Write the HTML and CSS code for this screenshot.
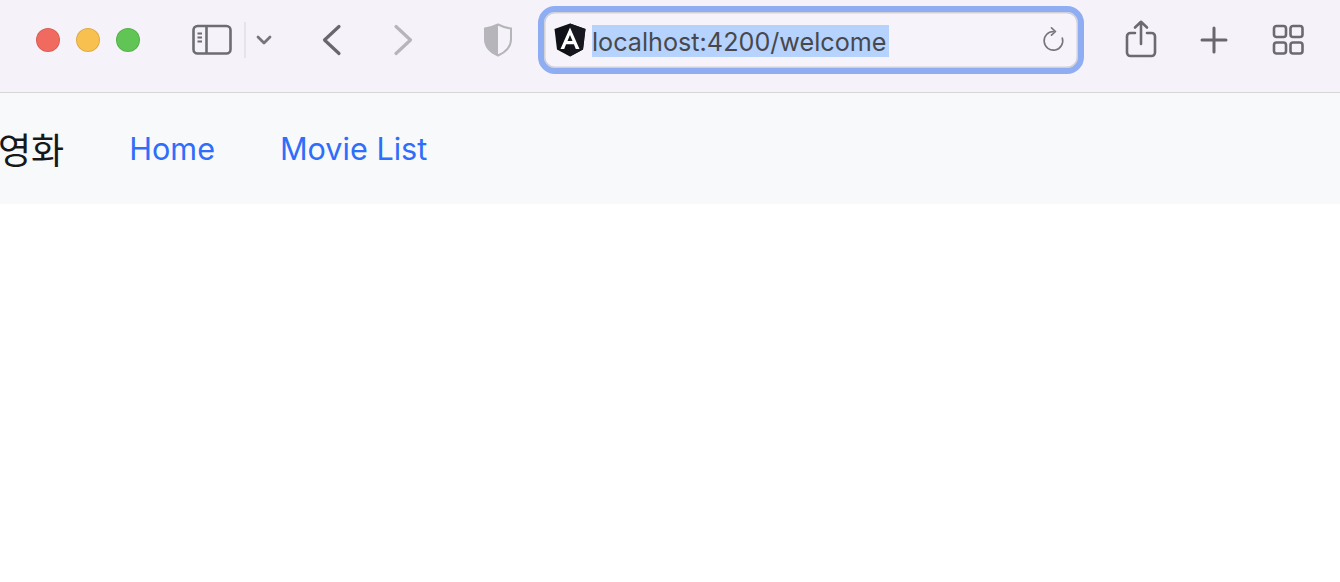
FILE: index.html
```html
<!DOCTYPE html>
<html lang="ko">
<head>
    <meta charset="UTF-8">
    <meta name="viewport" content="width=device-width, initial-scale=1.0">
    <title>localhost:4200/welcome</title>
    <link rel="stylesheet" href="styles.css">
</head>
<body>
    <header class="toolbar">
        <div class="lights">
            <span class="light red"></span>
            <span class="light yellow"></span>
            <span class="light green"></span>
        </div>

        <svg class="icon sidebar-icon" width="40" height="32" viewBox="0 0 40 32" fill="none" stroke="#6e6c73" stroke-width="2.6">
            <rect x="1.5" y="2" width="37" height="27.5" rx="4"/>
            <path d="M14.5 2v27.5"/>
            <path d="M5.5 9.500h4.500M5.500 13.500h4.500M5.500 17.500h4.500" stroke-width="1.800"/>
        </svg>
        <span class="divider"></span>
        <svg class="icon chevron-icon" width="16" height="12" viewBox="0 0 16 12" fill="none" stroke="#77757c" stroke-width="2.800" stroke-linecap="round" stroke-linejoin="round">
            <path d="M2 3l6 6 6-6"/>
        </svg>

        <svg class="icon back-icon" width="22" height="32" viewBox="0 0 22 32" fill="none" stroke="#69676d" stroke-width="3.200" stroke-linecap="round" stroke-linejoin="round">
            <path d="M18 2.500L3.500 16 18 29.500"/>
        </svg>
        <svg class="icon forward-icon" width="22" height="32" viewBox="0 0 22 32" fill="none" stroke="#b6b5ba" stroke-width="3.200" stroke-linecap="round" stroke-linejoin="round">
            <path d="M4 2.500L18.500 16 4 29.500"/>
        </svg>

        <svg class="icon shield-icon" width="30" height="34" viewBox="0 0 30 34" fill="none">
            <path d="M15 1.500C19 3.500 23 5 28 5.500V16C28 24 22 29.500 15 32.500 8 29.500 2 24 2 16V5.500C7 5 11 3.500 15 1.500Z" stroke="#b6b5ba" stroke-width="2"/>
            <path d="M15 1.500V32.500C8 29.500 2 24 2 16V5.500C7 5 11 3.500 15 1.500Z" fill="#b6b5ba"/>
        </svg>

        <div class="address">
            <svg class="favicon" width="32" height="34" viewBox="0 0 32 34">
                <path d="M16 0.500L31.500 6 29 26.500 16 33.500 3 26.500 0.500 6Z" fill="#0f1117"/>
                <path d="M16 0.500L31.500 6 29 26.500 16 33.500Z" fill="#17181f"/>
                <path d="M16 4.500L6.500 26H10.200L12.100 21.200H19.900L21.800 26H25.500ZM13.500 18L16 12 18.500 18Z" fill="#fff" fill-rule="evenodd"/>
            </svg>
            <span class="url">localhost:4200/welcome</span>
            <svg class="reload-icon" width="24" height="26" viewBox="0 0 24 26" fill="none" stroke="#77757c" stroke-width="1.600" stroke-linecap="round" stroke-linejoin="round">
                <path d="M12.500 4.500A9.300 9.300 0 1 0 21.300 11"/>
                <path d="M10.500 0.800L14.500 4.500 10.500 8.200"/>
            </svg>
        </div>

        <svg class="icon share-icon" width="32" height="38" viewBox="0 0 32 38" fill="none" stroke="#6c6a70" stroke-width="2.600" stroke-linecap="round" stroke-linejoin="round">
            <path d="M10 13H5.500C3.500 13 2 14.500 2 16.500V32.500C2 34.500 3.500 36 5.500 36H26.500C28.500 36 30 34.500 30 32.500V16.500C30 14.500 28.500 13 26.500 13H22"/>
            <path d="M16 24V2M10 7.500L16 1.800 22 7.500"/>
        </svg>
        <svg class="icon plus-icon" width="28" height="28" viewBox="0 0 28 28" fill="none" stroke="#69676d" stroke-width="3" stroke-linecap="round">
            <path d="M14 2v24M2 14h24"/>
        </svg>
        <svg class="icon tabs-icon" width="32" height="32" viewBox="0 0 32 32" fill="none" stroke="#6c6a70" stroke-width="2.600">
            <rect x="2" y="2" width="12" height="11" rx="2.500"/>
            <rect x="18.500" y="2" width="12" height="11" rx="2.500"/>
            <rect x="2" y="18.500" width="12" height="11" rx="2.500"/>
            <rect x="18.500" y="18.500" width="12" height="11" rx="2.500"/>
        </svg>
    </header>

    <nav class="navbar">
        <span class="brand">영화</span>
        <a class="nav-link" href="#">Home</a>
        <a class="nav-link" href="#">Movie List</a>
    </nav>
</body>
</html>
```

FILE: styles.css
```css
* {
    margin: 0;
    padding: 0;
    box-sizing: border-box;
}

body {
    font-family: Inter, "Noto Sans CJK KR", sans-serif;
    background: white;
    height: 582px;
    overflow: hidden;
}

.toolbar {
    display: flex;
    align-items: center;
    height: 93px;
    padding: 0 0 13px 36px;
    background: #f5f3f9;
    border-bottom: 1px solid #d6d5d8;
}

.icon {
    flex: none;
}

.lights {
    display: flex;
    gap: 16px;
}

.light {
    width: 24px;
    height: 24px;
    border-radius: 50%;
    border: 1px solid rgba(0, 0, 0, 0.1);
}

.red {
    background: #f16a60;
}

.yellow {
    background: #f8c04e;
}

.green {
    background: #60c554;
}

.sidebar-icon {
    margin-left: 52px;
}

.divider {
    width: 2px;
    height: 36px;
    margin-left: 12px;
    background: #e6e4ea;
}

.chevron-icon {
    margin-left: 10px;
}

.back-icon {
    margin-left: 49px;
}

.forward-icon {
    margin-left: 49px;
}

.shield-icon {
    margin-left: 69px;
}

.address {
    display: flex;
    align-items: center;
    width: 546px;
    height: 68px;
    margin-left: 25px;
    padding: 0 13px 0 10px;
    background: #f6f4fa;
    border: 6px solid #8fadf3;
    border-radius: 17px;
    box-shadow: inset 0 0 0 1.500px #d3d1d6;
}

.favicon {
    flex: none;
}

.url {
    margin-left: 6px;
    margin-top: 3px;
    padding-top: 2px;
    padding-right: 2px;
    font-size: 25.2px;
    line-height: 30px;
    color: #48484c;
    background: #b6d3fd;
}

.reload-icon {
    margin-left: auto;
}

.share-icon {
    margin-left: 41px;
    margin-bottom: 2px;
}

.plus-icon {
    margin-left: 43px;
}

.tabs-icon {
    margin-left: 44px;
}

.navbar {
    display: flex;
    align-items: center;
    height: 111px;
    background: #f8f9fa;
}

.brand {
    margin-left: -2px;
    margin-right: 65px;
    margin-bottom: 2px;
    font-size: 36px;
    color: #16181a;
}

.nav-link {
    margin-right: 65px;
    font-size: 30.6px;
    color: #2f6dfb;
    text-decoration: none;
}
```
